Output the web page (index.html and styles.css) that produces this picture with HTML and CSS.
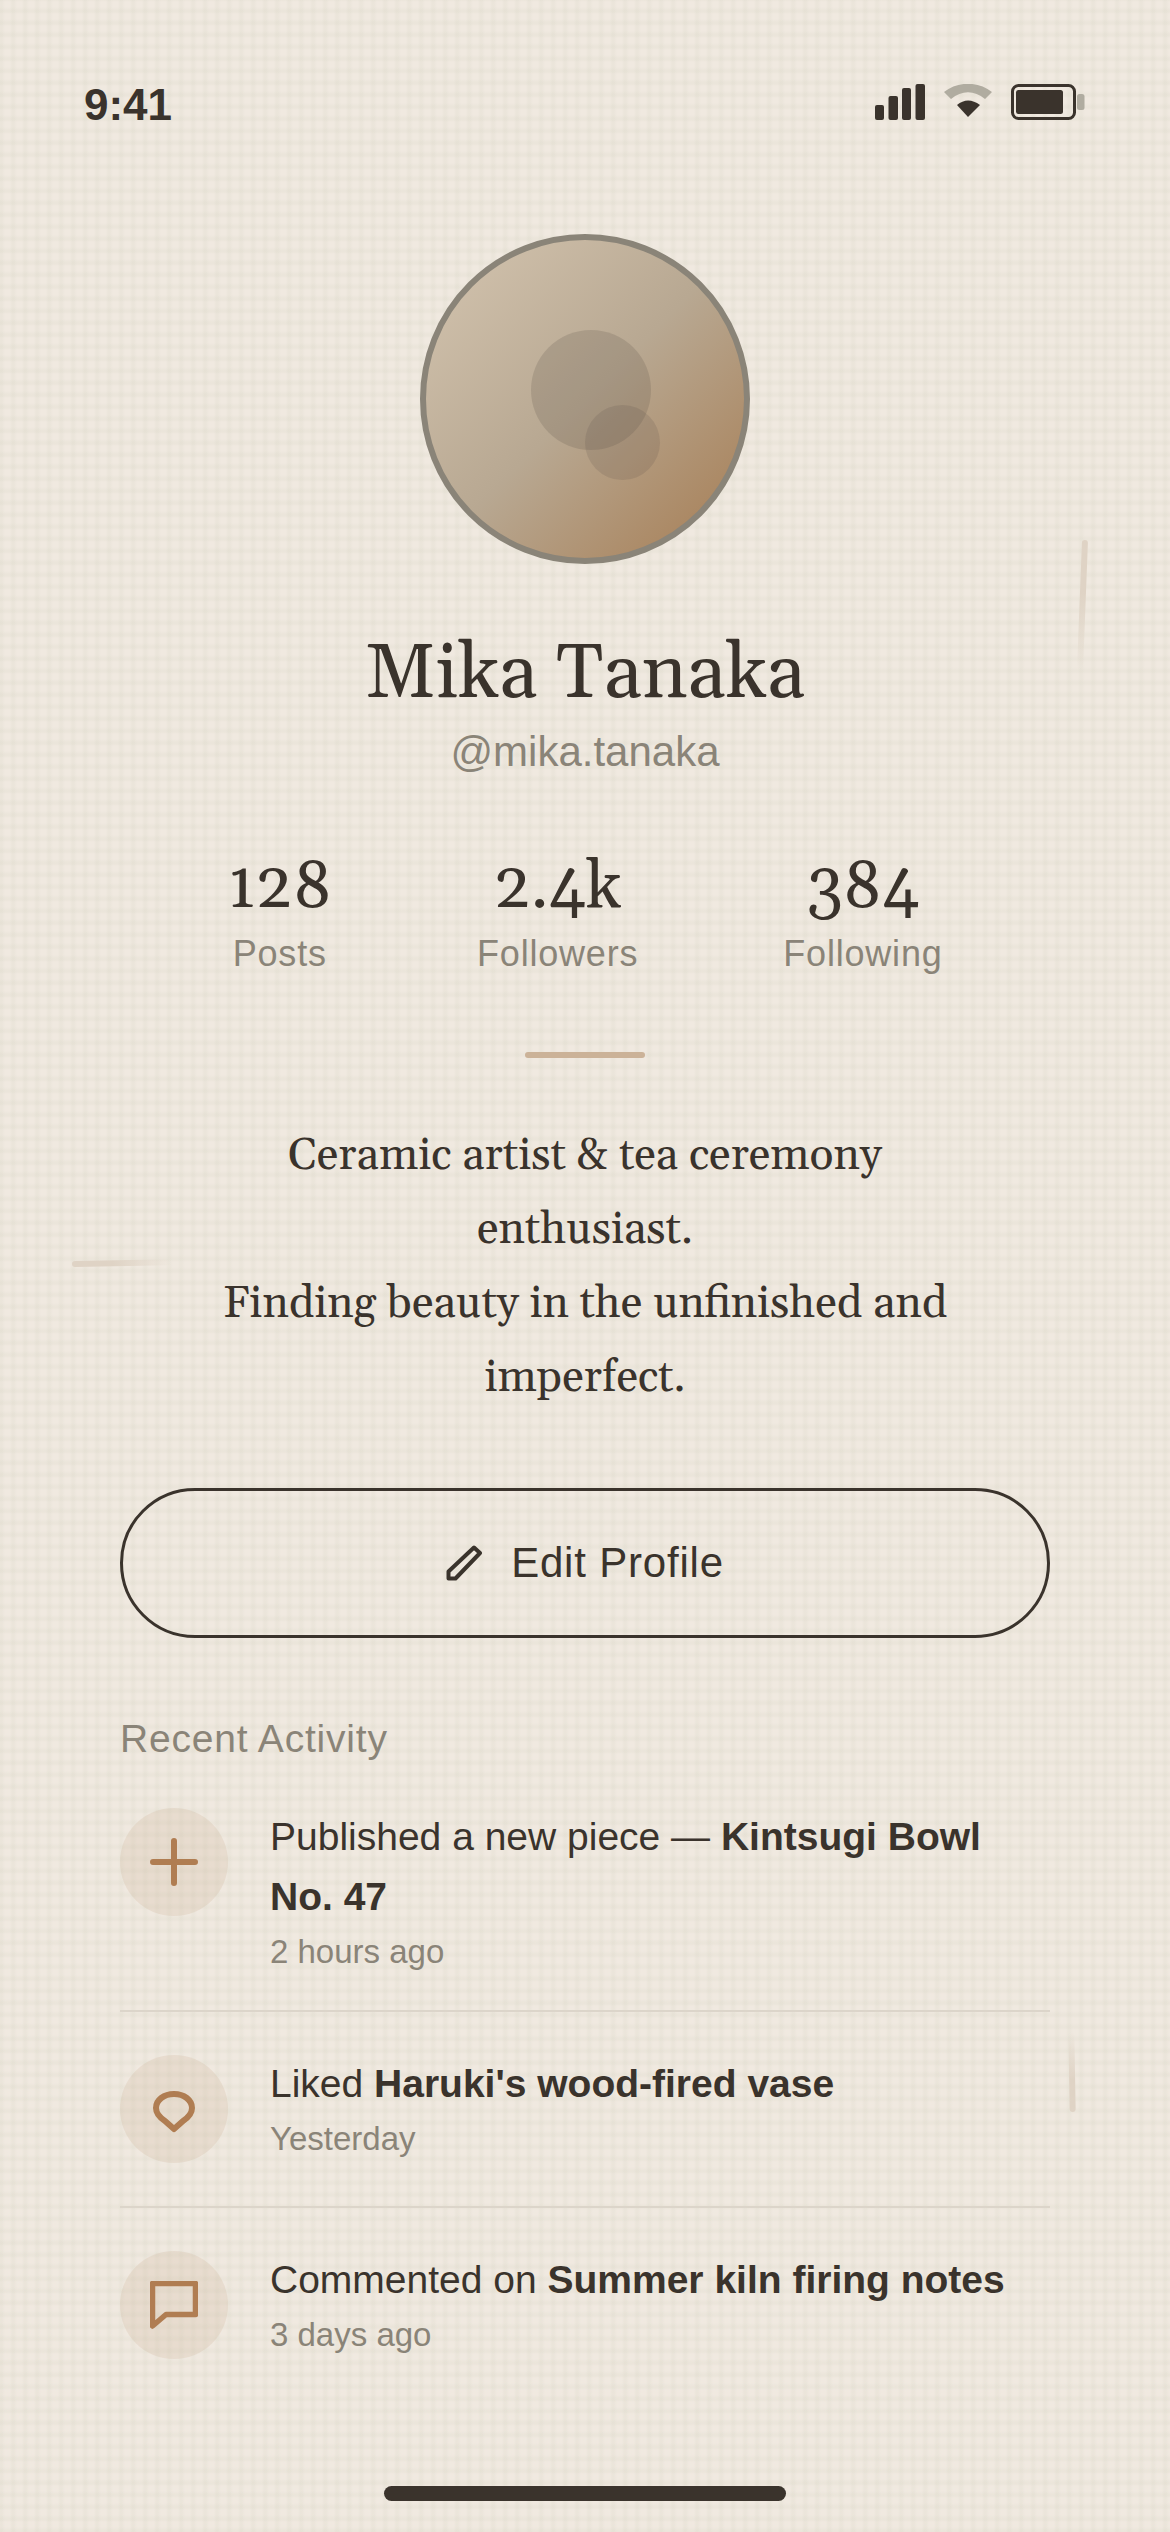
FILE: index.html
```html
<!DOCTYPE html>
<html>
<head>
  <title>Profile</title>
  <link rel="stylesheet" href="styles.css">
</head>
<body>
<div class="screen">
  <span class="stroke stroke-right"></span>
  <span class="stroke stroke-left"></span>
  <span class="stroke stroke-low"></span>

  <div class="status-bar">
    <span class="time">9:41</span>
    <div class="status-icons">
      <svg width="50" height="36" viewBox="0 0 50 36">
        <rect x="0" y="21" width="9" height="15" rx="2" fill="#3a332c"/>
        <rect x="13.500" y="12" width="9.500" height="24" rx="2" fill="#3a332c"/>
        <rect x="27" y="4" width="9" height="32" rx="2" fill="#3a332c"/>
        <rect x="40.500" y="0" width="9.500" height="36" rx="2" fill="#3a332c"/>
      </svg>
      <svg width="48" height="34" viewBox="0 0 48 34">
        <path d="M0 8 C14 -3 34 -3 48 8 L41 15 C30 6 18 6 7 15 Z" fill="#b0aca0"/>
        <path d="M13 21 C20 15 28 15 36 21 L24 33 Z" fill="#3a332c"/>
      </svg>
      <svg width="74" height="36" viewBox="0 0 74 36">
        <rect x="1.500" y="1.500" width="62" height="33" rx="6" fill="none" stroke="#3a332c" stroke-width="3"/>
        <rect x="5" y="6" width="47" height="24" rx="2.500" fill="#3a332c"/>
        <rect x="66" y="10" width="7.500" height="16" rx="2.500" fill="#b0aca0"/>
      </svg>
    </div>
  </div>

  <div class="avatar">
    <span class="avatar-big"></span>
    <span class="avatar-small"></span>
  </div>

  <h1 class="name">Mika Tanaka</h1>
  <div class="handle">@mika.tanaka</div>

  <div class="stats">
    <div class="stat"><div class="stat-num">128</div><div class="stat-label">Posts</div></div>
    <div class="stat"><div class="stat-num">2.4k</div><div class="stat-label">Followers</div></div>
    <div class="stat"><div class="stat-num">384</div><div class="stat-label">Following</div></div>
  </div>

  <div class="rule"></div>

  <p class="bio">Ceramic artist &amp; tea ceremony enthusiast.<br>Finding beauty in the unfinished and imperfect.</p>

  <button class="edit-btn">
    <svg width="36" height="36" viewBox="0 0 36 36" fill="none" stroke="#3a332c" stroke-width="4" stroke-linejoin="round">
      <path d="M2.500 33.500 V26.500 L28 2.500 L34 8 L9.500 33.500 Z"/>
    </svg>
    <span>Edit Profile</span>
  </button>

  <div class="section-title">Recent Activity</div>

  <div class="activity-list">
    <div class="activity">
      <div class="activity-icon">
        <svg width="48" height="48" viewBox="0 0 48 48" fill="none" stroke="#b07d52" stroke-width="6" stroke-linecap="round">
          <path d="M24 3 V45 M3 24 H45"/>
        </svg>
      </div>
      <div class="activity-text">
        <div class="activity-line">Published a new piece — <b>Kintsugi Bowl No. 47</b></div>
        <div class="activity-time">2 hours ago</div>
      </div>
    </div>

    <div class="activity">
      <div class="activity-icon">
        <svg width="48" height="48" viewBox="0 0 48 48" fill="none" stroke="#b07d52" stroke-width="6" stroke-linejoin="round">
          <path d="M24 9 C34 9 42 15 42 23 C42 28 39 32 33 36 L24 44 L15 36 C9 32 6 28 6 23 C6 15 14 9 24 9 Z"/>
        </svg>
      </div>
      <div class="activity-text">
        <div class="activity-line">Liked <b>Haruki's wood-fired vase</b></div>
        <div class="activity-time">Yesterday</div>
      </div>
    </div>

    <div class="activity">
      <div class="activity-icon">
        <svg width="48" height="48" viewBox="0 0 48 48" fill="none" stroke="#b07d52" stroke-width="5.500" stroke-linejoin="round">
          <path d="M2.500 2.500 H45.500 V33.500 H16 L2.500 45 Z"/>
        </svg>
      </div>
      <div class="activity-text">
        <div class="activity-line">Commented on <b>Summer kiln firing notes</b></div>
        <div class="activity-time">3 days ago</div>
      </div>
    </div>
  </div>

  <div class="home-indicator"></div>
</div>
</body>
</html>
```

FILE: styles.css
```css
* {
  box-sizing: border-box;
}
html, body {
  margin: 0;
  padding: 0;
}
.screen {
  position: relative;
  width: 1170px;
  height: 2532px;
  overflow: hidden;
  display: flex;
  flex-direction: column;
  align-items: center;
  color: #3a332c;
  font-family: "Liberation Sans", Arial, sans-serif;
  background-color: #f0e9e0;
  background-image:
    repeating-linear-gradient(0deg, rgba(205, 205, 185, 0.14) 0 2px, transparent 5px, transparent 10px, rgba(205, 205, 185, 0.14) 12px),
    repeating-linear-gradient(90deg, rgba(205, 205, 185, 0.14) 0 2px, transparent 5px, transparent 10px, rgba(205, 205, 185, 0.14) 12px);
}

/* status bar */
.status-bar {
  width: 100%;
  height: 104px;
  margin-top: 80px;
  padding: 0 85px 0 84px;
  display: flex;
  justify-content: space-between;
  align-items: flex-start;
  flex-shrink: 0;
}
.time {
  font-size: 44px;
  font-weight: bold;
  line-height: 50px;
}
.status-icons {
  display: flex;
  align-items: flex-start;
  gap: 19px;
  margin-top: 4px;
}

/* avatar */
.avatar {
  position: relative;
  width: 330px;
  height: 330px;
  margin-top: 50px;
  border: 6px solid #8a8478;
  border-radius: 50%;
  flex-shrink: 0;
  background: linear-gradient(135deg, #d4c5b0 0%, #b8a892 50%, #a67c52 100%);
}
.avatar-big {
  position: absolute;
  left: 105px;
  top: 90px;
  width: 120px;
  height: 120px;
  border-radius: 50%;
  background: rgba(90, 80, 70, 0.2);
}
.avatar-small {
  position: absolute;
  left: 159px;
  top: 165px;
  width: 75px;
  height: 75px;
  border-radius: 50%;
  background: rgba(90, 80, 70, 0.17);
}

/* name */
.name {
  margin: 65px 0 0;
  font-family: Gelasio, Georgia, "Liberation Serif", serif;
  font-size: 76.5px;
  font-weight: normal;
  line-height: 92px;
}
.handle {
  margin-top: 7px;
  font-size: 42px;
  line-height: 48px;
  color: #8a8478;
}

/* stats */
.stats {
  display: flex;
  gap: 145px;
  margin-top: 72px;
}
.stat {
  text-align: center;
}
.stat-num {
  font-family: Gelasio, Georgia, "Liberation Serif", serif;
  font-size: 66px;
  line-height: 80px;
}
.stat-label {
  margin-top: 5px;
  font-size: 36px;
  line-height: 42px;
  letter-spacing: 0.8px;
  color: #8a8478;
}

.rule {
  width: 120px;
  height: 6px;
  margin-top: 77px;
  border-radius: 3px;
  background: #cbb298;
  flex-shrink: 0;
}

/* bio */
.bio {
  width: 774px;
  margin: 61px 0 0;
  font-family: Gelasio, Georgia, "Liberation Serif", serif;
  font-size: 44.5px;
  line-height: 74px;
  text-align: center;
}

/* button */
.edit-btn {
  display: flex;
  align-items: center;
  justify-content: center;
  gap: 29px;
  width: 930px;
  height: 150px;
  margin-top: 73px;
  border: 3px solid #3a332c;
  border-radius: 75px;
  background: transparent;
  color: #3a332c;
  font-family: "Liberation Sans", Arial, sans-serif;
  font-size: 42px;
  letter-spacing: 0.8px;
  flex-shrink: 0;
}

.section-title {
  width: 930px;
  margin-top: 78px;
  font-size: 39px;
  line-height: 46px;
  letter-spacing: 0.8px;
  color: #8a8478;
}

/* activity */
.activity-list {
  width: 930px;
  margin-top: 3px;
}
.activity {
  display: flex;
  gap: 42px;
  padding: 43px 0 43px;
  border-bottom: 2px solid #dcd5ca;
}
.activity:last-child {
  border-bottom: none;
}
.activity-icon {
  display: flex;
  align-items: center;
  justify-content: center;
  width: 108px;
  height: 108px;
  border-radius: 50%;
  background: rgba(200, 170, 140, 0.2);
  flex-shrink: 0;
}
.activity-text {
  margin-top: -1px;
}
.activity-line {
  font-size: 39px;
  line-height: 60px;
}
.activity-time {
  margin-top: 9px;
  font-size: 33px;
  line-height: 31px;
  color: #8a8478;
}

/* decorative strokes */
.stroke {
  position: absolute;
  border-radius: 3px;
}
.stroke-right {
  left: 1082px;
  top: 540px;
  width: 6px;
  height: 130px;
  background: linear-gradient(180deg, #dfd3c5 40%, rgba(223, 211, 197, 0));
  transform: rotate(2.2deg);
  transform-origin: top center;
}
.stroke-left {
  left: 72px;
  top: 1261px;
  width: 100px;
  height: 6px;
  background: linear-gradient(90deg, #dfd3c5 40%, rgba(223, 211, 197, 0));
  transform: rotate(-1deg);
  transform-origin: left center;
}
.stroke-low {
  left: 1069px;
  top: 2032px;
  width: 6px;
  height: 80px;
  background: linear-gradient(0deg, #dfd3c5 40%, rgba(223, 211, 197, 0));
  transform: rotate(-1deg);
}

.home-indicator {
  position: absolute;
  left: 384px;
  bottom: 31px;
  width: 402px;
  height: 15px;
  border-radius: 8px;
  background: #3a332c;
}
```
